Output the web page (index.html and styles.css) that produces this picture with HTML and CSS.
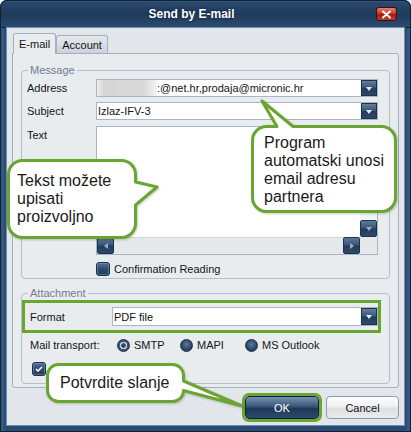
FILE: index.html
```html
<!DOCTYPE html>
<html lang="hr">
<head>
  <meta charset="UTF-8">
  <meta name="viewport" content="width=device-width, initial-scale=1.0">
  <title>Send by E-mail</title>
  <link rel="stylesheet" href="styles.css">
</head>
<body>
  <div class="window">
    <div class="titlebar">
      <div class="title">Send by E-mail</div>
      <div class="close-btn">
        <svg width="11" height="9" viewBox="0 0 11 9"><path d="M2 1.5 L9 7.5 M9 1.5 L2 7.5" stroke="#fff" stroke-width="2" stroke-linecap="round"/></svg>
      </div>
    </div>

    <div class="client">
      <div class="tabs">
        <div class="tab active">E-mail</div>
        <div class="tab">Account</div>
      </div>

      <div class="panel">
        <fieldset class="group">
          <legend>Message</legend>
          <div class="message-body">
            <div class="row">
              <span class="lbl">Address</span>
              <div class="combo">
                <span class="hidden-name"></span>
                <span class="val">:@net.hr,prodaja@micronic.hr</span>
                <span class="drop"></span>
              </div>
            </div>
            <div class="row">
              <span class="lbl">Subject</span>
              <div class="combo">
                <span class="val">Izlaz-IFV-3</span>
                <span class="drop"></span>
              </div>
            </div>
            <div class="row row-text">
              <span class="lbl">Text</span>
              <div class="memo">
                <div class="memo-area"></div>
                <div class="vscroll"><span class="sbtn down"></span></div>
                <div class="hscroll"><span class="sbtn left"></span><span class="sbtn right"></span></div>
                <div class="corner"></div>
              </div>
            </div>
            <div class="check-row confirm">
              <span class="checkbox"></span>
              <span class="check-lbl">Confirmation Reading</span>
            </div>
          </div>
        </fieldset>

        <fieldset class="group attach">
          <legend>Attachment</legend>
          <div class="attach-body">
            <div class="format-row">
              <span class="format-lbl">Format</span>
              <div class="combo sel">
                <span class="val">PDF file</span>
                <span class="drop"></span>
              </div>
            </div>
            <div class="mail-row">
              <span class="mail-lbl">Mail transport:</span>
              <span class="radio-item smtp"><span class="radio on"></span>SMTP</span>
              <span class="radio-item mapi"><span class="radio"></span>MAPI</span>
              <span class="radio-item"><span class="radio"></span>MS Outlook</span>
            </div>
            <div class="check-row attach-check">
              <span class="checkbox checked">
                <svg width="8" height="6" viewBox="0 0 8 6"><path d="M1 3 L3 5 L7 1" fill="none" stroke="#fff" stroke-width="1.6"/></svg>
              </span>
            </div>
          </div>
        </fieldset>
      </div>

      <div class="buttons">
        <div class="btn btn-ok">OK</div>
        <div class="btn btn-cancel">Cancel</div>
      </div>
    </div>

    <!-- napomene preko dijaloga -->
    <div class="callout callout-address">
      <svg width="150" height="116" viewBox="0 0 150 116">
        <path d="M17.5 27.5 L28 27.5 L13 2 L44 27.5 L132.5 27.5 A14 14 0 0 1 146.5 41.5 L146.5 98.5 A14 14 0 0 1 132.5 112.5 L17.5 112.5 A14 14 0 0 1 3.5 98.5 L3.5 41.5 A14 14 0 0 1 17.5 27.5 Z"/>
      </svg>
      <p>Program<br>automatski unosi<br>email adresu<br>partnera</p>
    </div>

    <div class="callout callout-text">
      <svg width="154" height="84" viewBox="0 0 154 84">
        <path d="M16.5 3.5 L115.5 3.5 A14 14 0 0 1 129.5 17.5 L129.5 25 L151 30 L129.5 48 L129.5 66.5 A14 14 0 0 1 115.5 80.5 L16.5 80.5 A14 14 0 0 1 2.5 66.5 L2.5 17.5 A14 14 0 0 1 16.5 3.5 Z"/>
      </svg>
      <p>Tekst možete<br>upisati<br>proizvoljno</p>
    </div>

    <div class="callout callout-ok">
      <svg width="200" height="48" viewBox="0 0 200 48">
        <path d="M13.5 2.5 L127.5 2.5 A11 11 0 0 1 138.5 13.5 L138.5 19 L197 44 L138.5 28.5 A11 11 0 0 1 127.5 39.5 L13.5 39.5 A11 11 0 0 1 2.5 28.5 L2.5 13.5 A11 11 0 0 1 13.5 2.5 Z"/>
      </svg>
      <p>Potvrdite slanje</p>
    </div>
  </div>
</body>
</html>
```

FILE: styles.css
```css
body {
  margin: 0;
  background: #fff;
  font-family: "Liberation Sans", Arial, sans-serif;
  font-size: 11px;
  color: #151515;
}
.window {
  position: relative;
  width: 411px;
  height: 432px;
  box-sizing: border-box;
  padding: 0 7px 7px;
  background: linear-gradient(90deg, #1c3556, #3a5f88 2px, #2a4b71 5px, #2a4b71 calc(100% - 5px), #3a5f88 calc(100% - 2px), #1c3556);
  border-radius: 7px 7px 0 0;
  box-shadow: inset 0 0 0 1px #0f2238;
  overflow: hidden;
}
.titlebar {
  display: flex;
  align-items: center;
  height: 28px;
  margin: 0 -7px;
  padding: 0 7px;
  border-radius: 7px 7px 0 0;
  background: linear-gradient(#4d6e94 0, #2a4a6e 2px, #1f3b5c 50%, #2b4c71 100%);
  box-shadow: inset 0 0 0 1px #0f2238;
}
.title {
  flex: 1;
  text-align: center;
  color: #fff;
  font-weight: bold;
  font-size: 12px;
  text-shadow: 0 0 3px #0b1a2c;
}
.close-btn {
  width: 21px;
  height: 14px;
  box-sizing: border-box;
  margin-right: 7px;
  display: flex;
  align-items: center;
  justify-content: center;
  border: 1px solid #3d0e0a;
  border-radius: 3px;
  background: linear-gradient(#e2806f, #c8392b 45%, #a01c12 55%, #c23b2a);
}
.client {
  height: 397px;
  box-sizing: border-box;
  padding: 5px 5px 0;
  background: #e2e6ea;
  box-shadow: 0 0 0 1px #6f8fb3;
}
.tabs {
  position: relative;
  z-index: 1;
  display: flex;
  align-items: flex-end;
  height: 20px;
  padding-left: 1px;
}
.tab {
  height: 18px;
  box-sizing: border-box;
  padding: 0 5px;
  display: flex;
  align-items: center;
  border: 1px solid #a3b0bf;
  border-bottom: none;
  border-radius: 3px 3px 0 0;
  background: linear-gradient(#e4e8ec, #cdd3da);
}
.tab.active {
  height: 21px;
  margin-bottom: -1px;
  background: #e9ecef;
}
.panel {
  border: 1px solid #a3b0bf;
  background: #e9ecef;
  padding: 0 8px 3px;
  border-radius: 0 3px 3px 3px;
}
.group {
  margin: 10px 0 0;
  padding: 0;
  border: 1px solid #b4c0cc;
  border-radius: 4px;
  min-width: 0;
}
.group legend {
  margin-left: 6px;
  padding: 0 2px;
  color: #6e7e8f;
  line-height: 13px;
}
.group.attach {
  margin-top: 8px;
}
.message-body {
  padding: 2px 11px 2px 5px;
}
.row {
  display: flex;
  align-items: center;
  height: 18px;
  margin-bottom: 5px;
}
.row-text {
  align-items: flex-start;
  height: auto;
  margin: 6px 0 0;
}
.row-text .lbl {
  padding-top: 3px;
}
.lbl {
  width: 69px;
  flex: none;
  line-height: 13px;
}
.combo {
  flex: 1;
  height: 18px;
  box-sizing: border-box;
  display: flex;
  align-items: center;
  border: 1px solid #a9b5c2;
  background: #fff;
  white-space: nowrap;
  overflow: hidden;
}
.val {
  padding-left: 1px;
}
.hidden-name {
  width: 60px;
  align-self: stretch;
  background: linear-gradient(90deg, #eeeeee, #d6d6d6 12%, #dadada 80%, #f4f4f4);
}
.hidden-name + .val {
  padding-left: 0;
}
.drop {
  margin-left: auto;
  width: 16px;
  align-self: stretch;
  flex: none;
  box-sizing: border-box;
  display: flex;
  align-items: center;
  justify-content: center;
  border: 1px solid #1c324d;
  background: linear-gradient(#647fa0, #3b5779 45%, #223d5e 55%, #2c4a6d);
}
.drop::after {
  content: "";
  border-left: 3.5px solid transparent;
  border-right: 3.5px solid transparent;
  border-top: 4px solid #e6ecf2;
  margin-top: 1px;
}
.memo {
  flex: 1;
  height: 129px;
  box-sizing: border-box;
  display: grid;
  grid-template-columns: 1fr 17px;
  grid-template-rows: 1fr 17px;
  border: 1px solid #a9b5c2;
  background: #fff;
}
.vscroll {
  display: flex;
  flex-direction: column;
  justify-content: flex-end;
  background: #f3f4f6;
}
.hscroll {
  display: flex;
  justify-content: space-between;
  background: #e6e9ec;
  box-shadow: inset 0 1px 0 #cfd6dd;
}
.corner {
  background: #e6e9ec;
}
.sbtn {
  width: 17px;
  height: 17px;
  box-sizing: border-box;
  display: flex;
  align-items: center;
  justify-content: center;
  border: 1px solid #1c324d;
  border-radius: 2px;
  background: linear-gradient(#5d7898, #3a5678 45%, #223d5e 55%, #2c4a6d);
}
.sbtn.down::after {
  content: "";
  border-left: 3.5px solid transparent;
  border-right: 3.5px solid transparent;
  border-top: 4px solid #9aacbf;
}
.sbtn.left::after {
  content: "";
  border-top: 3.5px solid transparent;
  border-bottom: 3.5px solid transparent;
  border-right: 4px solid #9aacbf;
}
.sbtn.right::after {
  content: "";
  border-top: 3.5px solid transparent;
  border-bottom: 3.5px solid transparent;
  border-left: 4px solid #9aacbf;
}
.check-row {
  display: flex;
  align-items: center;
  height: 14px;
}
.confirm {
  margin-top: 7px;
  padding-left: 69px;
}
.checkbox {
  width: 14px;
  height: 14px;
  box-sizing: border-box;
  display: flex;
  align-items: center;
  justify-content: center;
  border: 1px solid #1a2f48;
  border-radius: 3px;
  background: linear-gradient(#58739a, #2f4b6e 50%, #213c5d);
  box-shadow: inset 0 0 0 1px rgba(140, 165, 195, 0.45);
}
.check-lbl {
  margin-left: 4px;
}
.attach-body {
  padding: 0 8px 7px 0;
}
.format-row {
  display: flex;
  align-items: center;
  height: 33px;
  box-sizing: border-box;
  padding-left: 5px;
  border: 3px solid #6aa431;
}
.format-lbl {
  width: 82px;
  flex: none;
}
.combo.sel {
  height: 19px;
}
.mail-row {
  display: flex;
  align-items: center;
  height: 18px;
  margin-top: 3px;
  padding-left: 8px;
}
.mail-lbl {
  width: 87px;
  flex: none;
}
.radio-item {
  display: flex;
  align-items: center;
}
.radio-item.smtp {
  width: 63px;
}
.radio-item.mapi {
  width: 65px;
}
.radio {
  width: 13px;
  height: 13px;
  box-sizing: border-box;
  margin-right: 4px;
  border: 1px solid #1a2f48;
  border-radius: 50%;
  background: radial-gradient(circle at 50% 40%, #5c789c, #2b4668 60%, #1e3756);
}
.radio.on {
  background: radial-gradient(circle, #2c4768 0 2px, #c7cfd9 2.5px 3.5px, #3a5677 4px);
}
.attach-check {
  margin-top: 8px;
  padding-left: 10px;
}
.buttons {
  display: flex;
  justify-content: flex-end;
  gap: 7px;
  margin-top: 8px;
}
.btn {
  width: 74px;
  height: 23px;
  box-sizing: border-box;
  display: flex;
  align-items: center;
  justify-content: center;
  border-radius: 4px;
}
.btn-ok {
  color: #fff;
  border: 1px solid #0f2136;
  background: linear-gradient(#7891b0, #3a5678 45%, #1f3858 55%, #2d4b6e);
  outline: 3px solid #6aa431;
}
.btn-cancel {
  width: 73px;
  border: 1px solid #8e9aa7;
  background: linear-gradient(#fdfdfd, #eef0f1 48%, #dcdfe3 52%, #e9ebed);
}
.callout {
  position: absolute;
}
.callout svg {
  position: absolute;
  left: 0;
  top: 0;
  filter: drop-shadow(1px 1px 1px rgba(0, 0, 0, 0.2));
}
.callout path {
  fill: #fff;
  stroke: #6aa431;
  stroke-width: 3;
  stroke-linejoin: round;
}
.callout p {
  position: relative;
  margin: 0;
  font-size: 16px;
  line-height: 18px;
  color: #1a1a1a;
  white-space: nowrap;
}
.callout-address {
  left: 249px;
  top: 99px;
  width: 150px;
  height: 116px;
}
.callout-address p {
  padding: 35px 0 0 15px;
}
.callout-text {
  left: 6px;
  top: 157px;
  width: 154px;
  height: 84px;
}
.callout-text p {
  padding: 15px 0 0 11px;
}
.callout-ok {
  left: 45px;
  top: 362px;
  width: 200px;
  height: 48px;
}
.callout-ok p {
  padding: 12px 0 0 15px;
}
```
